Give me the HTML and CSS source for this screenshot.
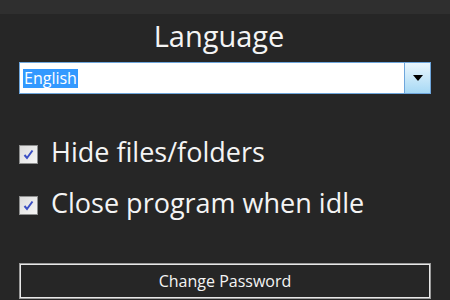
FILE: index.html
```html
<!DOCTYPE html>
<html lang="en">
<head>
    <meta charset="UTF-8">
    <meta name="viewport" content="width=device-width, initial-scale=1.0">
    <title>Settings</title>
    <link rel="stylesheet" href="styles.css">
</head>
<body>

    <!-- Title Bar -->
    <div class="top-bar"></div>

    <div class="panel">
        <h1 class="title">Language</h1>

        <!-- Language Dropdown -->
        <div class="combo">
            <span class="combo-value"><span class="selected">English</span></span>
            <span class="combo-btn">
                <svg width="10" height="6" viewBox="0 0 10 6"><path d="M0 0H10L5 6Z" fill="#000"/></svg>
            </span>
        </div>

        <!-- Options -->
        <div class="options">
            <label class="option">
                <span class="check">
                    <svg width="11" height="11" viewBox="0 0 11 11"><path d="M1.5 6L4 9L9.5 1.5" stroke="#3b4fc4" stroke-width="2" fill="none"/></svg>
                </span>
                Hide files/folders
            </label>
            <label class="option">
                <span class="check">
                    <svg width="11" height="11" viewBox="0 0 11 11"><path d="M1.5 6L4 9L9.5 1.5" stroke="#3b4fc4" stroke-width="2" fill="none"/></svg>
                </span>
                Close program when idle
            </label>
        </div>

        <button class="pw-btn">Change Password</button>
    </div>

</body>
</html>
```

FILE: styles.css
```css
/* General Styling */
:root {
    --background-color: #262626;
    --bar-color: #2f2f2f;
    --text-color: #f4f4f4;
    --focus-border: #6ea6dc;
}

body {
    font-family: "Open Sans", "Noto Sans", sans-serif;
    background-color: var(--background-color);
    color: var(--text-color);
    margin: 0;
    padding: 0;
    height: 300px;
    overflow: hidden;
}

.top-bar {
    height: 14px;
    background: var(--bar-color);
}

.panel {
    padding: 0 19px;
}

/* Title */
.title {
    margin: 0 0 4px;
    padding-right: 12px;
    text-align: center;
    font-weight: normal;
    font-size: 29px;
    line-height: 44px;
}

/* Dropdown */
.combo {
    display: flex;
    height: 30px;
    border: 1px solid var(--focus-border);
    background: white;
}

.combo-value {
    flex: 1;
    display: flex;
    align-items: center;
    padding-left: 3px;
}

.selected {
    background: #3399ff;
    color: white;
    font-size: 16px;
    line-height: 19px;
    padding: 0 1px;
}

.combo-btn {
    width: 25px;
    display: flex;
    align-items: center;
    justify-content: center;
    border-left: 1px solid var(--focus-border);
    background: linear-gradient(#eaf6fd, #a7d9f5);
}

/* Checkboxes */
.options {
    display: flex;
    flex-direction: column;
    gap: 21px;
    margin-top: 43px;
}

.option {
    display: flex;
    align-items: center;
    gap: 13px;
    font-size: 27px;
    line-height: 30px;
}

.check {
    width: 17px;
    height: 17px;
    margin-top: 4px;
    border: 1px solid #8e8f8f;
    background: linear-gradient(135deg, #dcdcdc, #f6f6f6);
    display: flex;
    align-items: center;
    justify-content: center;
    box-sizing: content-box;
}

/* Button */
.pw-btn {
    display: block;
    width: 100%;
    height: 36px;
    margin-top: 45px;
    background: var(--background-color);
    color: var(--text-color);
    font-family: inherit;
    font-size: 16px;
    border: 1px solid #9a9a9a;
    box-shadow: inset 0 0 0 1px #e8e8e8;
    cursor: pointer;
}
```
